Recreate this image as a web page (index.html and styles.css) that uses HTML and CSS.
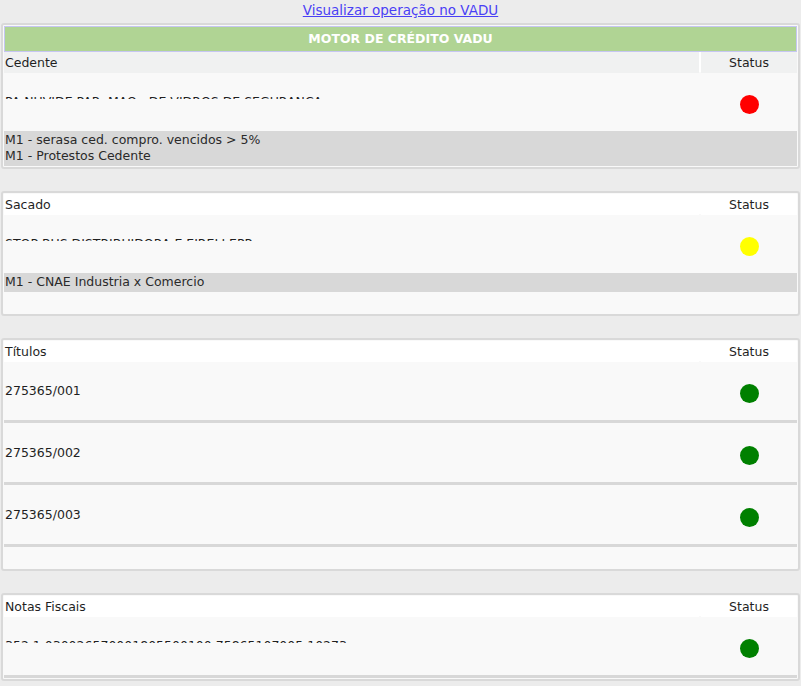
FILE: index.html
```html
<!DOCTYPE html>
<html lang="pt-BR">
<head>
<meta charset="utf-8">
<title>Motor de Crédito VADU</title>
<link rel="stylesheet" href="styles.css">
</head>
<body>
<div class="top">
  <a class="vadu-link" href="#">Visualizar operação no VADU</a>
</div>

<section class="panel">
  <div class="panel-title">MOTOR DE CRÉDITO VADU</div>
  <div class="row head head-alt">
    <div class="cell name">Cedente</div>
    <div class="cell status">Status</div>
  </div>
  <div class="row item">
    <div class="cell name"><div class="clip"><span>PA NUVIDE PAR. MAQ.  DE VIDROS DE SEGURANCA</span></div></div>
    <div class="cell status"><span class="dot dot-red"></span></div>
  </div>
  <div class="msg">
    <div>M1 - serasa ced. compro. vencidos &gt; 5%</div>
    <div>M1 - Protestos Cedente</div>
  </div>
</section>

<section class="panel">
  <div class="row head">
    <div class="cell name">Sacado</div>
    <div class="cell status">Status</div>
  </div>
  <div class="row item">
    <div class="cell name"><div class="clip"><span>STOP BUS DISTRIBUIDORA E EIRELI EPP</span></div></div>
    <div class="cell status"><span class="dot dot-yellow"></span></div>
  </div>
  <div class="msg">
    <div>M1 - CNAE Industria x Comercio</div>
  </div>
  <div class="tail"></div>
</section>

<section class="panel">
  <div class="row head">
    <div class="cell name">Títulos</div>
    <div class="cell status">Status</div>
  </div>
  <div class="row item">
    <div class="cell name">275365/001</div>
    <div class="cell status"><span class="dot dot-green"></span></div>
  </div>
  <div class="msg"></div>
  <div class="row item">
    <div class="cell name">275365/002</div>
    <div class="cell status"><span class="dot dot-green"></span></div>
  </div>
  <div class="msg"></div>
  <div class="row item">
    <div class="cell name">275365/003</div>
    <div class="cell status"><span class="dot dot-green"></span></div>
  </div>
  <div class="msg"></div>
  <div class="tail"></div>
</section>

<section class="panel">
  <div class="row head">
    <div class="cell name">Notas Fiscais</div>
    <div class="cell status">Status</div>
  </div>
  <div class="row item">
    <div class="cell name"><div class="clip"><span>352 1 030026570001805500100 75865107005 10273</span></div></div>
    <div class="cell status"><span class="dot dot-green"></span></div>
  </div>
  <div class="msg"></div>
</section>
</body>
</html>
```
FILE: styles.css
```css
html, body {
  margin: 0;
  padding: 0;
  overflow: hidden;
}
body {
  background: #ececec;
  font-family: "DejaVu Sans", "Noto Sans", sans-serif;
  font-size: 12.5px;
  color: #1f1f1f;
}
.top {
  text-align: center;
  height: 23px;
  line-height: 20px;
}
.vadu-link {
  color: #4a40f5;
  font-size: 13.5px;
  text-decoration: underline;
}
.panel {
  margin: 0 0 22px 1px;
  width: 799px;
  box-sizing: border-box;
  border: 2px solid #d9d9d9;
  border-radius: 3px;
  padding: 1px;
  background: #f9f9f9;
}
.panel-title {
  height: 24px;
  line-height: 24px;
  background: #b0d494;
  border: 1px solid #c6c6f2;
  color: #fff;
  font-weight: bold;
  text-align: center;
  font-size: 12.5px;
}
.row {
  display: grid;
  grid-template-columns: 1fr 96px;
  column-gap: 2px;
}
.head {
  height: 20px;
  line-height: 21px;
  background: #fff;
}
.head .cell {
  background: #fff;
}
.head-alt .cell {
  background: #f0f1f1;
}
.cell.name {
  padding-left: 1px;
}
.cell.status {
  text-align: center;
}
.item {
  height: 59px;
  align-items: center;
}
.dot {
  display: inline-block;
  width: 19px;
  height: 19px;
  border-radius: 50%;
  margin-top: 6px;
  vertical-align: middle;
}
.dot-red { background: #ff0000; }
.dot-yellow { background: #ffff00; }
.dot-green { background: #008000; }
.clip {
  height: 16px;
  line-height: 16px;
}
.clip span {
  display: block;
  height: 5px;
  margin-top: 1px;
  overflow: hidden;
  white-space: pre;
}
.msg {
  background: #d8d8d8;
  padding: 1px 0 2px 1px;
  line-height: 16px;
  color: #2a2a2a;
}
.tail {
  height: 21px;
}
```
